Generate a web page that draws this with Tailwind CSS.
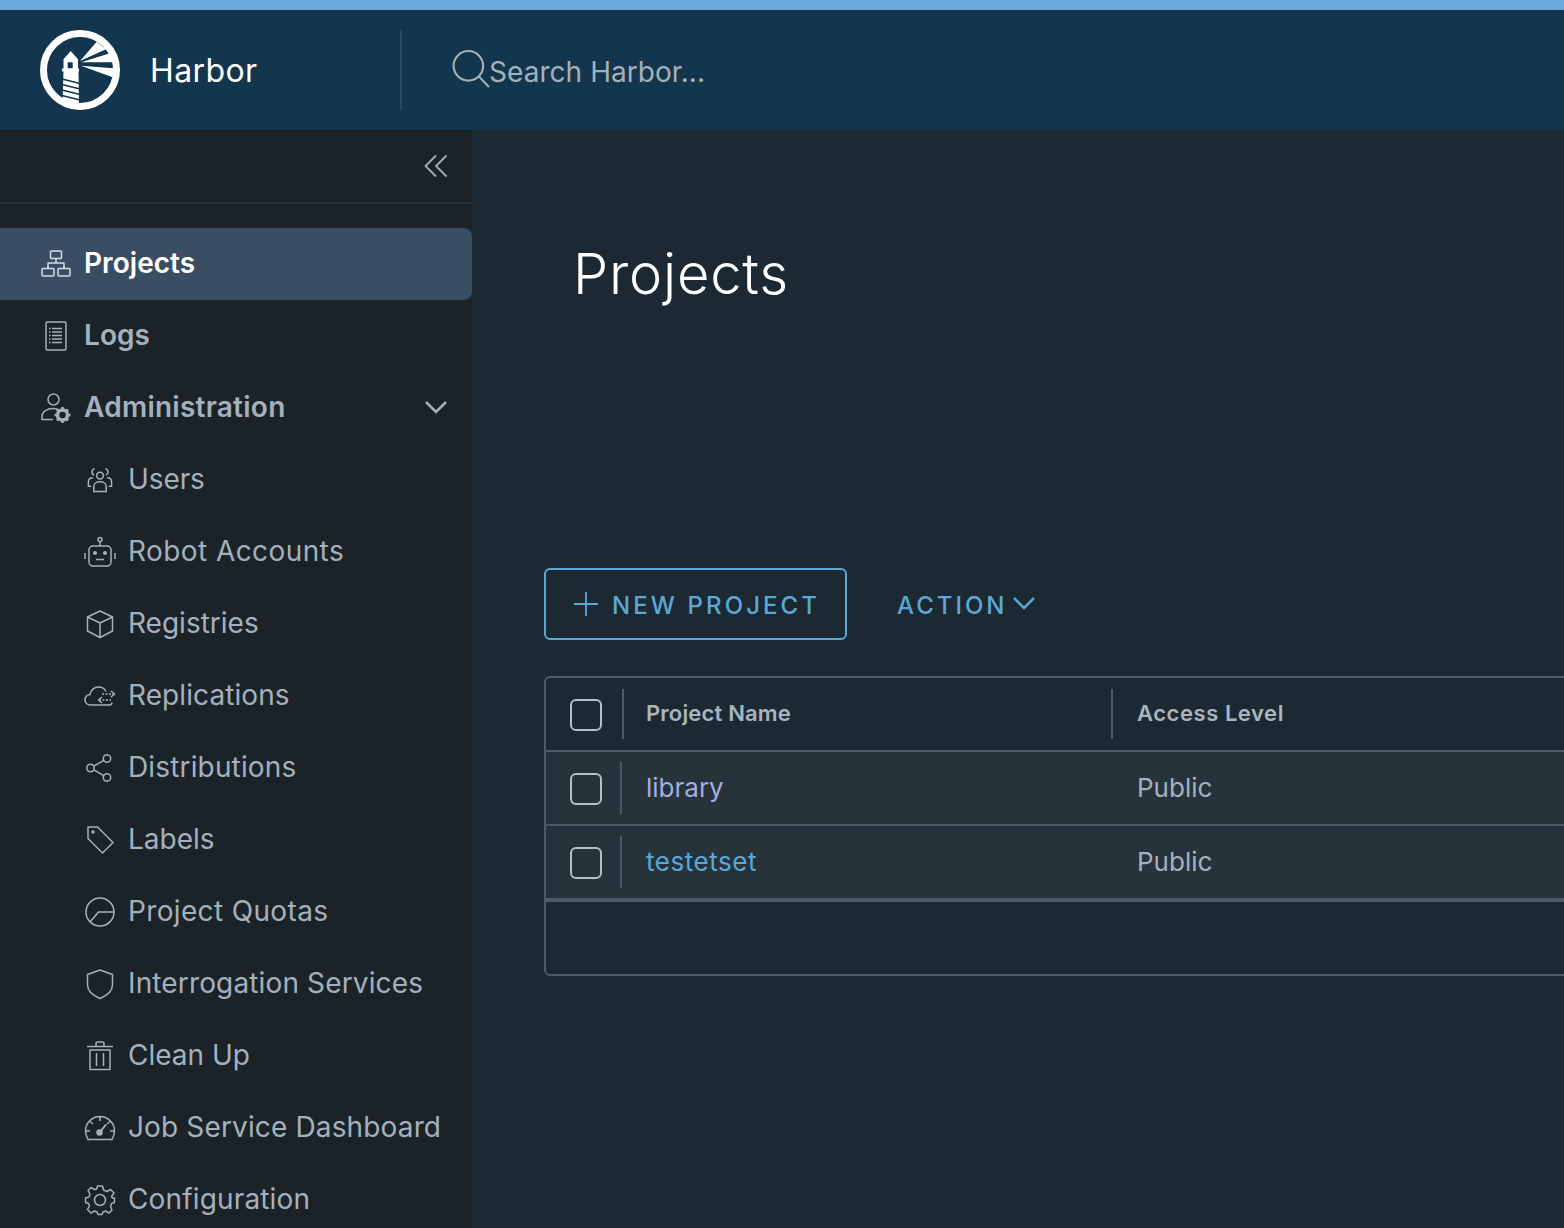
<!DOCTYPE html>
<html lang="en">
<head>
<meta charset="utf-8"/>
<title>Harbor</title>
<script src="https://cdn.jsdelivr.net/npm/@tailwindcss/browser@4"></script>
</head>
<body class="h-[1228px] overflow-hidden bg-[#1d2932] font-['Inter',sans-serif]">
  <div class="h-[10px] bg-[#69acd9]"></div>
  <!-- header -->
  <header class="flex h-[120px] items-center bg-[#13354d]">
    <div class="ml-[40px] w-[80px] h-[80px]">
      <svg viewBox="0 0 80 80" class="w-[80px] h-[80px]">
        <circle cx="40" cy="40" r="36.5" fill="none" stroke="#fff" stroke-width="7"/>
        <path fill="#fff" d="M40 31 56.7 11.7 66 19.3ZM41 32.3 70 23.3 73.3 32.3ZM41 35.700 73.3 38.3 72.7 47.3ZM30.7 21 38 29.3V38.500H39V41.500H38.500L39 73H22.500L23.500 41.500H22V38.500H23.500V29.3ZM27.7 32.3V38.3H32.7V32.3Z" fill-rule="evenodd"/>
        <path stroke="#13354d" stroke-width="1.600" fill="none" d="M22 49 40 53.500M22 54.500 40 59M22 60 40 64.500M22 65.500 40 70"/>
      </svg>
    </div>
    <div class="ml-[30px] w-[251px] text-[32px] text-white tracking-[0.4px] mt-[1px]">Harbor</div>
    <div class="h-[80px] w-[2px] ml-[-1px] bg-[#2b4a60]"></div>
    <svg viewBox="0 0 36 36" class="ml-[50px] w-[38px] h-[38px] mt-[-2px]" fill="none" stroke="#a4b1b9" stroke-width="2">
      <circle cx="15.500" cy="15" r="14"/><path d="M25.500 25 35 35"/>
    </svg>
    <div class="ml-[-1px] text-[28px] text-[#a4b1b9] tracking-[0.05px] mt-[3px]">Search Harbor...</div>
  </header>
  <div class="flex h-[1098px]">
    <!-- sidebar -->
    <aside class="w-[472px] shrink-0 bg-[#1b2329]">
      <div class="flex h-[74px] items-center justify-end border-b-2 border-[#262f36] pr-[24px]">
        <svg viewBox="0 0 24 24" class="w-[24px] h-[24px]" fill="none" stroke="#a4b1bd" stroke-width="1.800"><path d="M12 1.500 1.500 12 12 22.500M22.500 1.500 12 12 22.500 22.500"/></svg>
      </div>
      <nav class="mt-[24px]">
        <a class="flex h-[72px] items-center gap-[12px] rounded-r-[8px] bg-[#394d63] pl-[40px] text-[28px] font-semibold text-white tracking-[0.05px]">
          <svg viewBox="0 0 32 32" class="w-[32px] h-[32px]" fill="none" stroke="#d5dde2" stroke-width="1.500" stroke-linejoin="round"><rect x="10.500" y="3" width="11" height="7.500" rx="1"/><rect x="2" y="20.500" width="12" height="7.500" rx="1"/><rect x="18" y="20.500" width="12" height="7.500" rx="1"/><path d="M16 10.500V15M8 20.500V15H24V20.500"/></svg>
          <span class="mb-[2px]">Projects</span>
        </a>
        <a class="flex h-[72px] items-center gap-[12px] pl-[40px] text-[28px] font-semibold text-[#a4b1bd] tracking-[0.05px]">
          <svg viewBox="0 0 32 32" class="w-[32px] h-[32px]" fill="none" stroke="#a4b1bd" stroke-width="1.500"><rect x="6" y="2" width="20" height="28" rx="1.500"/><path d="M12 8.500H22M12 12H22M12 15.500H22M12 19H22M12 22.500H22M9 8.500H10.500M9 12H10.500M9 15.500H10.500M9 19H10.500M9 22.500H10.500"/></svg>
          <span class="mb-[2px]">Logs</span>
        </a>
        <a class="flex h-[72px] items-center gap-[12px] pl-[40px] pr-[24px] text-[28px] font-semibold text-[#a4b1bd] tracking-[0.25px]">
          <svg viewBox="0 0 32 32" class="w-[32px] h-[32px]" fill="none" stroke="#a4b1bd" stroke-width="1.500"><circle cx="13.500" cy="7.500" r="5.500"/><path d="M18 17.500C16 16.500 15 16.500 13 16.500 7 16.500 2 20 2 24V27.500H13"/><circle cx="22.500" cy="23" r="5" stroke-width="3.500"/><path stroke-width="2.500" d="M22.500 15V18M22.500 28V31M14.500 23H17.500M27.500 23H30.500M17 17.500 19 19.500M26 26.500 28 28.500M17 28.500 19 26.500M26 19.500 28 17.500"/></svg>
          <span class="mb-[2px] flex-1">Administration</span>
          <svg viewBox="0 0 24 24" class="w-[24px] h-[24px] mb-[2px]" fill="none" stroke="#a4b1bd" stroke-width="2.600"><path d="M2 7 12 17 22 7"/></svg>
        </a>
        <a class="flex h-[72px] items-center gap-[12px] pl-[84px] text-[28px] text-[#a4b1bd] tracking-[-0.1px]">
          <svg viewBox="-2 -2 36 36" class="w-[32px] h-[32px]" fill="none" stroke="#a4b1bd" stroke-width="1.700"><circle cx="16" cy="11" r="3.800"/><path d="M9 29V23C9 20 12 18 16 18S23 20 23 23V29ZM10 3.500C8 3.500 7 5 7 7 7 8.500 8 10 9.500 10.500M22 3.500C24 3.500 25 5 25 7 25 8.500 24 10 22.500 10.500M6 23H3V18C3 15 5 13.500 8 13.500M26 23H29V18C29 15 27 13.500 24 13.500"/></svg>
          <span class="mb-[2px]">Users</span>
        </a>
        <a class="flex h-[72px] items-center gap-[12px] pl-[84px] text-[28px] text-[#a4b1bd] tracking-[0.42px]">
          <svg viewBox="0 0 32 32" class="w-[32px] h-[32px]" fill="none" stroke="#a4b1bd" stroke-width="1.500"><circle cx="16" cy="3.500" r="2"/><path d="M16 5.500V10M5 14C5 11.500 7 10 9 10H23C25 10 27 11.500 27 14V26C27 28.500 25 30 23 30H9C7 30 5 28.500 5 26ZM1 17V23M31 17V23M12 23.500H20"/><circle cx="11" cy="17" r="1.300" fill="#a4b1bd"/><circle cx="21" cy="17" r="1.300" fill="#a4b1bd"/></svg>
          <span class="mb-[2px]">Robot Accounts</span>
        </a>
        <a class="flex h-[72px] items-center gap-[12px] pl-[84px] text-[28px] text-[#a4b1bd]">
          <svg viewBox="0 0 32 32" class="w-[32px] h-[32px]" fill="none" stroke="#a4b1bd" stroke-width="1.500" stroke-linejoin="round"><path d="M16 3 28.500 9V23L16 29.500 3.500 23V9ZM3.500 9 16 15 28.500 9M16 15V29.500"/></svg>
          <span class="mb-[2px]">Registries</span>
        </a>
        <a class="flex h-[72px] items-center gap-[12px] pl-[84px] text-[28px] text-[#a4b1bd] tracking-[0.08px]">
          <svg viewBox="0 0 32 32" class="w-[32px] h-[32px]" fill="none" stroke="#a4b1bd" stroke-width="1.500"><path d="M25 25H7C3 25 1 22.500 1 20 1 17 3 15 6 14.500 6.500 10 10.500 7 14.500 7 17.500 7 20.500 8.500 22 11.500M25 25C27 25 28 24 28 22.500"/><path stroke-dasharray="2 1.500" d="M18 14H30M15 20H27"/><path d="M27 11 30.500 14 27 17M18 17 14.500 20 18 23"/></svg>
          <span class="mb-[2px]">Replications</span>
        </a>
        <a class="flex h-[72px] items-center gap-[12px] pl-[84px] text-[28px] text-[#a4b1bd] tracking-[0.15px]">
          <svg viewBox="0 0 32 32" class="w-[32px] h-[32px] ml-[-2px] mr-[2px]" fill="none" stroke="#a4b1bd" stroke-width="1.500"><circle cx="8.500" cy="16" r="3.700"/><circle cx="25" cy="6.500" r="3.700"/><circle cx="25" cy="25.500" r="3.700"/><path d="M11.700 14.200 21.800 8.300M11.700 17.800 21.800 23.700"/></svg>
          <span class="mb-[2px]">Distributions</span>
        </a>
        <a class="flex h-[72px] items-center gap-[12px] pl-[84px] text-[28px] text-[#a4b1bd]">
          <svg viewBox="0 0 32 32" class="w-[32px] h-[32px]" fill="none" stroke="#a4b1bd" stroke-width="1.500" stroke-linejoin="round"><path d="M4 3H13.500L29 18.500 18.500 29 4 14.500Z"/><circle cx="9" cy="8" r="1" fill="#a4b1bd"/></svg>
          <span class="mb-[2px]">Labels</span>
        </a>
        <a class="flex h-[72px] items-center gap-[12px] pl-[84px] text-[28px] text-[#a4b1bd] tracking-[0.35px]">
          <svg viewBox="0 0 32 32" class="w-[32px] h-[32px]" fill="none" stroke="#a4b1bd" stroke-width="1.500"><circle cx="16" cy="16" r="14"/><path d="M6 26 14.500 16H30"/></svg>
          <span class="mb-[2px]">Project Quotas</span>
        </a>
        <a class="flex h-[72px] items-center gap-[12px] pl-[84px] text-[28px] text-[#a4b1bd] tracking-[0.14px]">
          <svg viewBox="0 0 32 32" class="w-[32px] h-[32px]" fill="none" stroke="#a4b1bd" stroke-width="1.500" stroke-linejoin="round"><path d="M16 2 28.500 6.500V17C28.500 23 23 27.500 16 30.500 9 27.500 3.500 23 3.500 17V6.500Z"/></svg>
          <span class="mb-[2px]">Interrogation Services</span>
        </a>
        <a class="flex h-[72px] items-center gap-[12px] pl-[84px] text-[28px] text-[#a4b1bd]">
          <svg viewBox="0 0 32 32" class="w-[32px] h-[32px]" fill="none" stroke="#a4b1bd" stroke-width="1.500"><path d="M3 6.500H29M12 6.500V3.500C12 2.500 13 2 14 2H18C19 2 20 2.500 20 3.500V6.500M6 10H26V29.500H6ZM12.500 13V26M19.500 13V26"/></svg>
          <span class="mb-[2px]">Clean Up</span>
        </a>
        <a class="flex h-[72px] items-center gap-[12px] pl-[84px] text-[28px] text-[#a4b1bd] tracking-[0.14px]">
          <svg viewBox="0 0 32 32" class="w-[32px] h-[32px]" fill="none" stroke="#a4b1bd" stroke-width="1.500"><path d="M4 27.500C2.500 25 1.500 22 1.500 19 1.500 11 8 4.500 16 4.500S30.500 11 30.500 19C30.500 22 29.500 25 28 27.500ZM16 4.500V9M1.500 19H6M26 19H30.500M6 9.500 9 12M26 9.500 23 12"/><path stroke-width="2" d="M16 20 22 12.500"/><circle cx="15.500" cy="20.500" r="2.500" fill="#a4b1bd"/></svg>
          <span class="mb-[2px]">Job Service Dashboard</span>
        </a>
        <a class="flex h-[72px] items-center gap-[12px] pl-[84px] text-[28px] text-[#a4b1bd] tracking-[0.15px]">
          <svg viewBox="0 0 32 32" class="w-[32px] h-[32px]" fill="none" stroke="#a4b1bd" stroke-width="1.500" stroke-linejoin="round"><circle cx="16" cy="16" r="5.500"/><path d="M13.500 2H18.500L19.500 6 23 7.500 26.500 5.500 30 9 27.500 12.500 28.500 14 30.500 14V18.500L27.500 19.500 26.500 22.500 28 26 25 29 21.500 27 19 28 18 30.500H14L13 28 10.500 27 7 29 3.500 25.500 5.500 22 4.500 19.500 1.500 18.500V14L5 13 6 10 4 6.500 7 3.500 10.500 5.500 12.500 5Z"/></svg>
          <span class="mb-[2px]">Configuration</span>
        </a>
      </nav>
    </aside>
    <!-- main -->
    <main class="min-w-0 flex-1 overflow-hidden pl-[72px]">
      <h1 class="ml-[29px] mt-[102px] h-[84px] text-[56px] font-light leading-[84px] text-white tracking-[0.8px]">Projects</h1>
      <div class="mt-[252px] flex items-center">
        <button class="flex h-[72px] w-[303px] items-center rounded-[6px] border-2 border-[#5ba8d6] pl-[28px] text-[24px] font-medium text-[#5ba8d6] tracking-[3.100px]">
          <svg viewBox="0 0 24 24" class="mr-[14px] w-[24px] h-[24px]" fill="none" stroke="#5ba8d6" stroke-width="1.800"><path d="M12 0V24M0 12H24"/></svg>
          <span class="mt-[3px]">NEW PROJECT</span>
        </button>
        <button class="ml-[50px] flex h-[72px] items-center text-[24px] font-medium text-[#5ba8d6] tracking-[3px]">
          <span class="mt-[3px]">ACTION</span>
          <svg viewBox="0 0 24 24" class="ml-[4px] w-[24px] h-[24px]" fill="none" stroke="#5ba8d6" stroke-width="2.600"><path d="M2 6 12 16 22 6"/></svg>
        </button>
      </div>
      <div class="mt-[36px] w-[1200px] rounded-[6px] border-2 border-[#4c5a66]">
        <div class="flex h-[72px] items-center text-[22px] font-semibold text-[#a9b5bf] tracking-[0.18px]">
          <span class="ml-[24px] w-[32px] h-[32px] mt-[2px] rounded-[6px] border-2 border-[#b4c0c6]"></span>
          <span class="ml-[20px] h-[50px] w-[2px] bg-[#4c5a66]"></span>
          <span class="ml-[22px] w-[465px] mb-[2px]">Project Name</span>
          <span class="h-[50px] w-[2px] bg-[#4c5a66]"></span>
          <span class="ml-[24px] mb-[2px] tracking-[0.55px]">Access Level</span>
        </div>
        <div class="flex h-[74px] items-center border-t-2 border-[#4c5a66] bg-[#26333b] text-[26px] text-[#a4b1bd]">
          <span class="ml-[24px] w-[32px] h-[32px] mt-[2px] rounded-[6px] border-2 border-[#b4c0c6]"></span>
          <span class="ml-[18px] h-[52px] w-[2px] bg-[#4c5a66]"></span>
          <a class="ml-[24px] w-[491px] text-[#a3addf] mb-[2px]">library</a>
          <span class="mb-[2px]">Public</span>
        </div>
        <div class="flex h-[74px] items-center border-t-2 border-[#4c5a66] bg-[#26333b] text-[26px] text-[#a4b1bd]">
          <span class="ml-[24px] w-[32px] h-[32px] mt-[2px] rounded-[6px] border-2 border-[#b4c0c6]"></span>
          <span class="ml-[18px] h-[52px] w-[2px] bg-[#4c5a66]"></span>
          <a class="ml-[24px] w-[491px] text-[#5ba8d6] tracking-[0.55px] mb-[2px]">testetset</a>
          <span class="mb-[2px]">Public</span>
        </div>
        <div class="h-[76px] border-t-4 border-[#4c5a66]"></div>
      </div>
    </main>
  </div>
</body>
</html>
